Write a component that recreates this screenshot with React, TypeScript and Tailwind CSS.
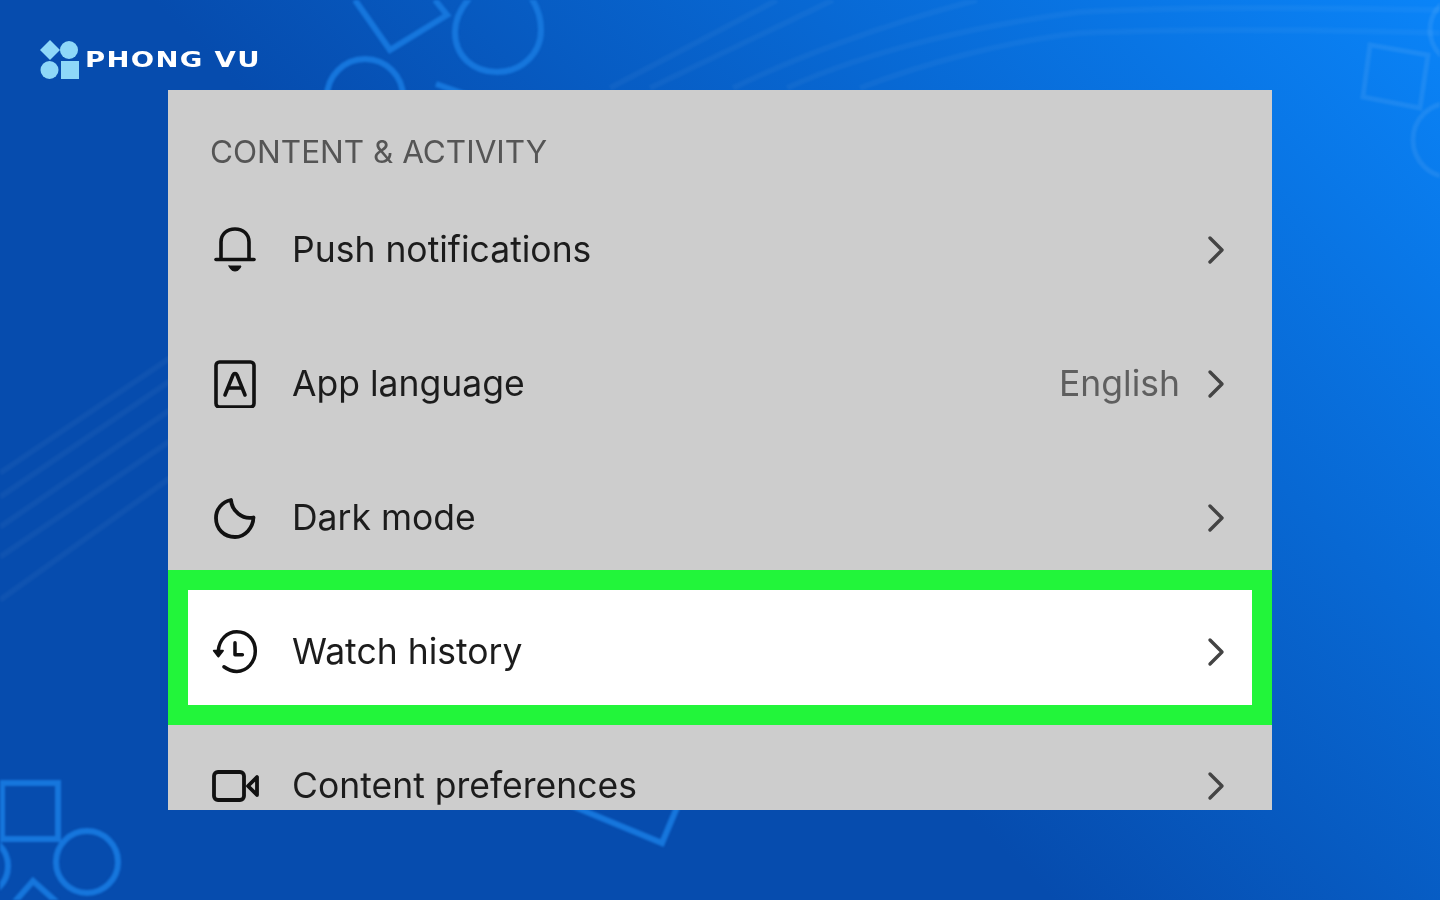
import React from "react";
import { ChevronRight } from "lucide-react";

const BellIcon = () => (
  <svg width="48" height="48" viewBox="0 0 48 48" fill="none" stroke="#111" strokeWidth="3.6" strokeLinecap="round" strokeLinejoin="round">
    <path d="M10 33V16C10 8 16 3 24 3s14 5 14 13v17" />
    <path d="M5 33.500h38" />
    <path d="M18 40h12c-1 3-3 5-6 5s-5-2-6-5z" fill="#111" strokeWidth="1" />
  </svg>
);

const LanguageIcon = () => (
  <svg width="48" height="48" viewBox="0 0 48 48" fill="none" stroke="#111" strokeWidth="3.6" strokeLinecap="round" strokeLinejoin="round">
    <rect x="5" y="2" width="38" height="45" rx="3.5" />
    <path d="M14 35 22 15c1-2 3-2 4 0l8 20" />
    <path d="M17.500 28h13" />
  </svg>
);

const MoonIcon = () => (
  <svg width="48" height="48" viewBox="0 0 48 48" fill="none" stroke="#111" strokeWidth="3.8" strokeLinecap="round" strokeLinejoin="round">
    <path d="M20 6C21 17 31 26 42.500 23.500 42 34 34 43 24 43 13 43 5 35 5 24 5 15 11 8 20 6z" />
  </svg>
);

const HistoryIcon = () => (
  <svg width="52" height="52" viewBox="0 0 52 52" fill="none" stroke="#111" strokeWidth="3.8" strokeLinecap="round" strokeLinejoin="round">
    <path d="M8 24C9 13 17 4 28 4c12 0 20 9 20 21s-9 22-20 22c-5 0-10-2-14-5" />
    <path d="M3 24.500h10L8 31z" fill="#111" strokeWidth="2" />
    <path d="M26 16v13h8" />
  </svg>
);

const VideoIcon = () => (
  <svg width="48" height="36" viewBox="0 0 48 36" fill="none" stroke="#111" strokeWidth="3.8" strokeLinecap="round" strokeLinejoin="round">
    <rect x="3" y="4" width="30" height="28" rx="4" />
    <path d="M37 18l9-9v18z" />
  </svg>
);

const Row = ({ icon, label, value, className }: { icon: React.ReactNode; label: string; value?: string; className: string }) => (
  <div className={"flex items-center " + className}>
    <div className="flex w-[48px] shrink-0 items-center justify-center">{icon}</div>
    <span className="ml-[33px] text-[35.5px] leading-none text-[#1c1c1c]">{label}</span>
    {value && <span className="ml-auto text-[35.5px] leading-none text-[#5f5f5f]">{value}</span>}
    <ChevronRight className={(value ? "ml-[12px]" : "ml-auto") + " shrink-0"} size={48} strokeWidth={1.7} color="#444" />
  </div>
);

const Backdrop = () => (
  <svg className="absolute inset-0 blur-[1px]" width="1440" height="900" viewBox="0 0 1440 900" fill="none">
    <g stroke="#1676dc" strokeWidth="6">
      <path d="M355 0l35 50 57-35-12-15" />
      <path d="M475 -8c-15 15-20 28-20 40 0 24 18 40 42 40s44-18 44-42c0-14-6-28-14-38" />
      <circle cx="365" cy="97" r="38" />
      <path d="M436 84l40 14" />
      <rect x="2" y="783" width="56" height="56" />
      <circle cx="87" cy="862" r="31" />
      <circle cx="-22" cy="866" r="30" />
      <path d="M12 905l21-24 27 24" />
      <path d="M570 805l92 38 16-38" />
    </g>
    <g stroke="#ffffff" strokeOpacity="0.08" strokeWidth="5">
      <path d="M1370 45l58 10-8 53-57-11z" />
      <circle cx="1450" cy="140" r="37" />
      <circle cx="1465" cy="30" r="35" />
    </g>
    <g stroke="#ffffff" strokeOpacity="0.04" strokeWidth="6">
      <path d="M0 473L170 358" />
      <path d="M0 497L170 381" />
      <path d="M0 527L170 410" />
      <path d="M0 557L170 441" />
      <path d="M0 600L170 478" />
      <path d="M610 88L777 0" />
      <path d="M650 88L833 0" />
      <path d="M733 88C790 60 880 25 977 0" />
      <path d="M787 88C870 50 980 25 1080 12C1200 6 1330 8 1440 10" />
      <path d="M860 88C920 65 1000 42 1080 33C1200 28 1330 30 1440 33" />
    </g>
  </svg>
);

const Logo = () => (
  <div className="flex items-center">
    <svg width="42" height="40" viewBox="0 0 42 40" fill="#8ed8f8">
      <path d="M11 0l10 10-10 10L1 10z" />
      <circle cx="30" cy="10" r="9" />
      <circle cx="10.500" cy="30" r="9" />
      <rect x="22" y="21" width="18" height="18" />
    </svg>
    <span className="ml-[4px] origin-left scale-x-[1.31] text-[21px] font-bold leading-none tracking-[1px] text-white font-['DejaVu_Sans',sans-serif]">PHONG VU</span>
  </div>
);

export default function App() {
  return (
    <div className="relative h-[900px] w-full overflow-hidden bg-[linear-gradient(45deg,#064cae_45%,#0a84f8_100%)] font-['Inter',sans-serif]">
      <Backdrop />
      <div className="relative h-[90px] pl-[39px] pt-[40px]">
        <Logo />
      </div>
      <div className="relative mx-auto h-[720px] w-[1104px] overflow-hidden bg-[#cdcdcd] blur-[0.4px]">
        <div className="flex h-[93px] items-end pb-[16px] pl-[42px] text-[31.5px] leading-none text-[#555555]">CONTENT &amp; ACTIVITY</div>
        <Row className="h-[134px] pl-[43px] pr-[32px]" icon={<BellIcon />} label="Push notifications" />
        <Row className="h-[134px] pl-[43px] pr-[32px]" icon={<LanguageIcon />} label="App language" value="English" />
        <Row className="h-[119px] pl-[43px] pr-[32px] pt-[15px]" icon={<MoonIcon />} label="Dark mode" />
        <div className="h-[155px] border-[20px] border-[#22f53a] bg-white">
          <Row className="h-[115px] pl-[23px] pr-[12px] pt-[9px]" icon={<HistoryIcon />} label="Watch history" />
        </div>
        <Row className="h-[122px] pl-[43px] pr-[32px]" icon={<VideoIcon />} label="Content preferences" />
      </div>
    </div>
  );
}
